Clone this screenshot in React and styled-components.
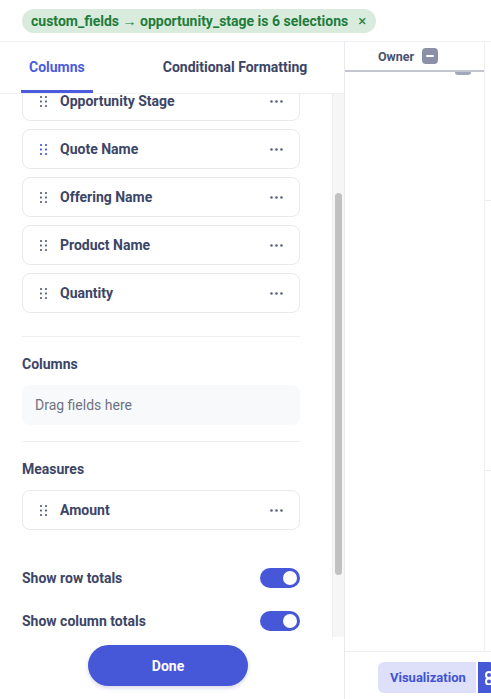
import React from "react";
import styled, { createGlobalStyle } from "styled-components";

const GlobalStyle = createGlobalStyle`
  html, body { margin: 0; padding: 0; background: #fff; }
  body { font-family: Roboto, "Noto Sans", "Liberation Sans", sans-serif; }
  * { box-sizing: border-box; }
`;

const INK = "#3c4566";
const BLUE = "#4657d8";

const Page = styled.div`
  width: 491px;
  height: 699px;
  display: flex;
  flex-direction: column;
  overflow: hidden;
  background: #fff;
`;

const FilterBar = styled.div`
  height: 42px;
  flex: none;
  display: flex;
  align-items: center;
  padding-left: 22px;
  border-bottom: 1px solid #eef0f3;
`;

const FilterChip = styled.div`
  height: 24px;
  display: flex;
  align-items: center;
  gap: 10px;
  padding: 0 10px 0 9px;
  border-radius: 12px;
  background: #d8ebdc;
  color: #1f7d3c;
  font-size: 14px;
  font-weight: 700;
  white-space: nowrap;
`;

const ChipClose = styled.span`
  font-weight: 400;
  font-size: 15px;
  color: #2b7f44;
`;

const Body = styled.div`
  flex: 1;
  min-height: 0;
  display: flex;
`;

const Sidebar = styled.aside`
  width: 345px;
  flex: none;
  display: flex;
  flex-direction: column;
  border-right: 1px solid #e9eaee;
`;

const Tabs = styled.div`
  height: 52px;
  flex: none;
  display: flex;
  align-items: stretch;
  padding-left: 21px;
  gap: 62px;
  border-bottom: 1px solid #eef0f3;
`;

const Tab = styled.div`
  display: flex;
  align-items: center;
  padding: 2px 8px 0;
  font-size: 14px;
  font-weight: 700;
  color: ${(p) => (p.$active ? "#4a5bdc" : INK)};
  border-bottom: 3px solid ${(p) => (p.$active ? "#4a5bdc" : "transparent")};
`;

const ScrollFrame = styled.div`
  flex: 1;
  min-height: 0;
  display: flex;
`;

const Viewport = styled.div`
  flex: 1;
  min-width: 0;
  overflow: hidden;
`;

const ScrollTrack = styled.div`
  width: 12px;
  flex: none;
  background: #f6f6f6;
  border-left: 1px solid #ebebeb;
  padding: 0 2px;
`;

const ScrollThumb = styled.div`
  margin-top: ${(p) => p.$offset}px;
  height: ${(p) => p.$size}px;
  border-radius: 4px;
  background: #c1c1c1;
`;

const ScrollContent = styled.div`
  padding: 0 32px 0 22px;
  display: flex;
  flex-direction: column;
`;

const Section = styled.section`
  display: flex;
  flex-direction: column;
  padding-top: ${(p) => p.$top || 0}px;
  padding-bottom: ${(p) => p.$bottom || 0}px;
  border-top: ${(p) => (p.$divider ? "1px solid #eceef1" : "none")};
`;

const SectionTitle = styled.h3`
  margin: 0 0 11px;
  font-size: 14px;
  line-height: 20px;
  font-weight: 700;
  color: ${INK};
`;

/* $shift pulls the list up so its first row reads as partly scrolled away */
const FieldList = styled.div`
  display: flex;
  flex-direction: column;
  gap: 8px;
  margin-top: ${(p) => (p.$shift ? -p.$shift : 0)}px;
`;

const FieldCard = styled.div`
  height: 40px;
  flex: none;
  display: flex;
  align-items: center;
  padding: 0 16px 0 17px;
  border: 1px solid #e7e9ed;
  border-radius: 8px;
  background: #fff;
`;

const FieldName = styled.span`
  flex: 1;
  margin-left: 13px;
  font-size: 14px;
  font-weight: 700;
  color: ${INK};
`;

const DropZone = styled.div`
  height: 40px;
  display: flex;
  align-items: center;
  padding-left: 13px;
  border-radius: 8px;
  background: #f8f9fb;
  color: #6e7381;
  font-size: 14px;
`;

const ToggleRow = styled.div`
  display: flex;
  align-items: center;
  justify-content: space-between;
  height: 20px;
  margin-top: ${(p) => p.$top}px;
  font-size: 14px;
  font-weight: 700;
  color: ${INK};
`;

const Switch = styled.div`
  width: 40px;
  height: 20px;
  border-radius: 10px;
  background: ${(p) => (p.$on ? BLUE : "#d4d7e0")};
  display: flex;
  align-items: center;
  justify-content: ${(p) => (p.$on ? "flex-end" : "flex-start")};
  padding: 0 3px;
`;

const Knob = styled.div`
  width: 14px;
  height: 14px;
  border-radius: 50%;
  background: #fff;
`;

const SidebarFooter = styled.div`
  height: 62px;
  flex: none;
  display: flex;
  justify-content: center;
  padding: 8px 8px 0 0;
`;

const DoneButton = styled.button`
  width: 160px;
  height: 41px;
  border: none;
  border-radius: 21px;
  background: ${BLUE};
  color: #fff;
  font-family: inherit;
  font-size: 14px;
  font-weight: 700;
  box-shadow: 0 2px 4px rgba(40, 50, 120, 0.18);
`;

const TableArea = styled.div`
  flex: 1;
  min-width: 0;
  display: flex;
  flex-direction: column;
`;

const Grid = styled.div`
  flex: 1;
  display: flex;
  min-height: 0;
`;

const Column = styled.div`
  width: ${(p) => p.$w}px;
  flex: none;
  display: flex;
  flex-direction: column;
  border-right: 1px solid #efeff2;
`;

const HeaderCell = styled.div`
  height: 30px;
  flex: none;
  display: flex;
  align-items: center;
  gap: 8px;
  padding-left: 33px;
  border-bottom: 2px solid #c3c6d1;
  font-size: 12.5px;
  font-weight: 700;
  color: #4a5170;
`;

const CollapseBadge = styled.span`
  width: 16px;
  height: 16px;
  border-radius: 4px;
  background: #8b90a8;
  display: flex;
  align-items: center;
  justify-content: center;
  &::after {
    content: "";
    width: 8px;
    height: 2px;
    border-radius: 1px;
    background: #fff;
  }
`;

const BodyCell = styled.div`
  flex: 1;
  padding-left: 110px;
`;

const PeekBadge = styled.div`
  width: 16px;
  height: 3px;
  border-radius: 0 0 4px 4px;
  background: #a3a7bb;
`;

const StripCell = styled.div`
  height: ${(p) => p.$h}px;
  flex: none;
  border-bottom: 1px solid #ececef;
`;

const TableFooter = styled.div`
  height: 48px;
  flex: none;
  display: flex;
  align-items: flex-start;
  padding: 10px 0 0 33px;
  border-top: 1px solid #eceef1;
`;

const ViewToggle = styled.div`
  display: flex;
  gap: 2px;
`;

const ViewButton = styled.div`
  height: 31px;
  display: flex;
  align-items: center;
  padding: ${(p) => (p.$icon ? "0 0 0 5px" : "0 10px 0 12px")};
  border-radius: ${(p) => (p.$icon ? "0 6px 6px 0" : "6px 0 0 6px")};
  background: ${(p) => (p.$active ? BLUE : "#dde0f8")};
  color: ${(p) => (p.$active ? "#fff" : "#4253d2")};
  font-size: 13px;
  font-weight: 700;
  white-space: nowrap;
`;

function DragHandle({ color }) {
  return (
    <svg width="7" height="11" viewBox="0 0 7 11" fill={color}>
      {[0, 4.5, 9].map((y) =>
        [0, 5].map((x) => <rect key={`${x}-${y}`} x={x} y={y} width="2" height="2" rx="0.4" />)
      )}
    </svg>
  );
}

function MoreDots() {
  return (
    <svg width="13" height="3" viewBox="0 0 13 3" fill="#59617d">
      <circle cx="1.5" cy="1.5" r="1.3" />
      <circle cx="6.5" cy="1.5" r="1.3" />
      <circle cx="11.5" cy="1.5" r="1.3" />
    </svg>
  );
}

function Field({ name, active }) {
  return (
    <FieldCard>
      <DragHandle color={active ? "#4a5bdc" : "#5c6480"} />
      <FieldName>{name}</FieldName>
      <MoreDots />
    </FieldCard>
  );
}

function Toggle({ label, on, top }) {
  return (
    <ToggleRow $top={top}>
      <span>{label}</span>
      <Switch $on={on}>
        <Knob />
      </Switch>
    </ToggleRow>
  );
}

const rowFields = ["Opportunity Stage", "Quote Name", "Offering Name", "Product Name", "Quantity"];

export default function App() {
  return (
    <Page>
      <GlobalStyle />
      <FilterBar>
        <FilterChip>
          <span>custom_fields → opportunity_stage is 6 selections</span>
          <ChipClose>×</ChipClose>
        </FilterChip>
      </FilterBar>
      <Body>
        <Sidebar>
          <Tabs>
            <Tab $active>Columns</Tab>
            <Tab>Conditional Formatting</Tab>
          </Tabs>
          <ScrollFrame>
            <Viewport>
              <ScrollContent>
                <Section $bottom={23}>
                  <FieldList $shift={13}>
                    {rowFields.map((f) => (
                      <Field key={f} name={f} active={f === "Quote Name"} />
                    ))}
                  </FieldList>
                </Section>
                <Section $divider $top={17} $bottom={16}>
                  <SectionTitle>Columns</SectionTitle>
                  <DropZone>Drag fields here</DropZone>
                </Section>
                <Section $divider $top={17}>
                  <SectionTitle>Measures</SectionTitle>
                  <FieldList>
                    <Field name="Amount" />
                  </FieldList>
                </Section>
                <Toggle label="Show row totals" on top={38} />
                <Toggle label="Show column totals" on top={23} />
              </ScrollContent>
            </Viewport>
            <ScrollTrack>
              <ScrollThumb $offset={99} $size={382} />
            </ScrollTrack>
          </ScrollFrame>
          <SidebarFooter>
            <DoneButton>Done</DoneButton>
          </SidebarFooter>
        </Sidebar>
        <TableArea>
          <Grid>
            <Column $w={140}>
              <HeaderCell>
                Owner
                <CollapseBadge />
              </HeaderCell>
              <BodyCell>
                <PeekBadge />
              </BodyCell>
            </Column>
            <Column $w={20}>
              <StripCell $h={159} />
              <StripCell $h={270} />
            </Column>
          </Grid>
          <TableFooter>
            <ViewToggle>
              <ViewButton>Visualization</ViewButton>
              <ViewButton $active $icon>
                <svg width="12" height="14" viewBox="0 0 12 14" fill="none" stroke="#fff" strokeWidth="2">
                  <circle cx="6" cy="4" r="3" />
                  <circle cx="6" cy="10.5" r="3" />
                </svg>
              </ViewButton>
            </ViewToggle>
          </TableFooter>
        </TableArea>
      </Body>
    </Page>
  );
}
